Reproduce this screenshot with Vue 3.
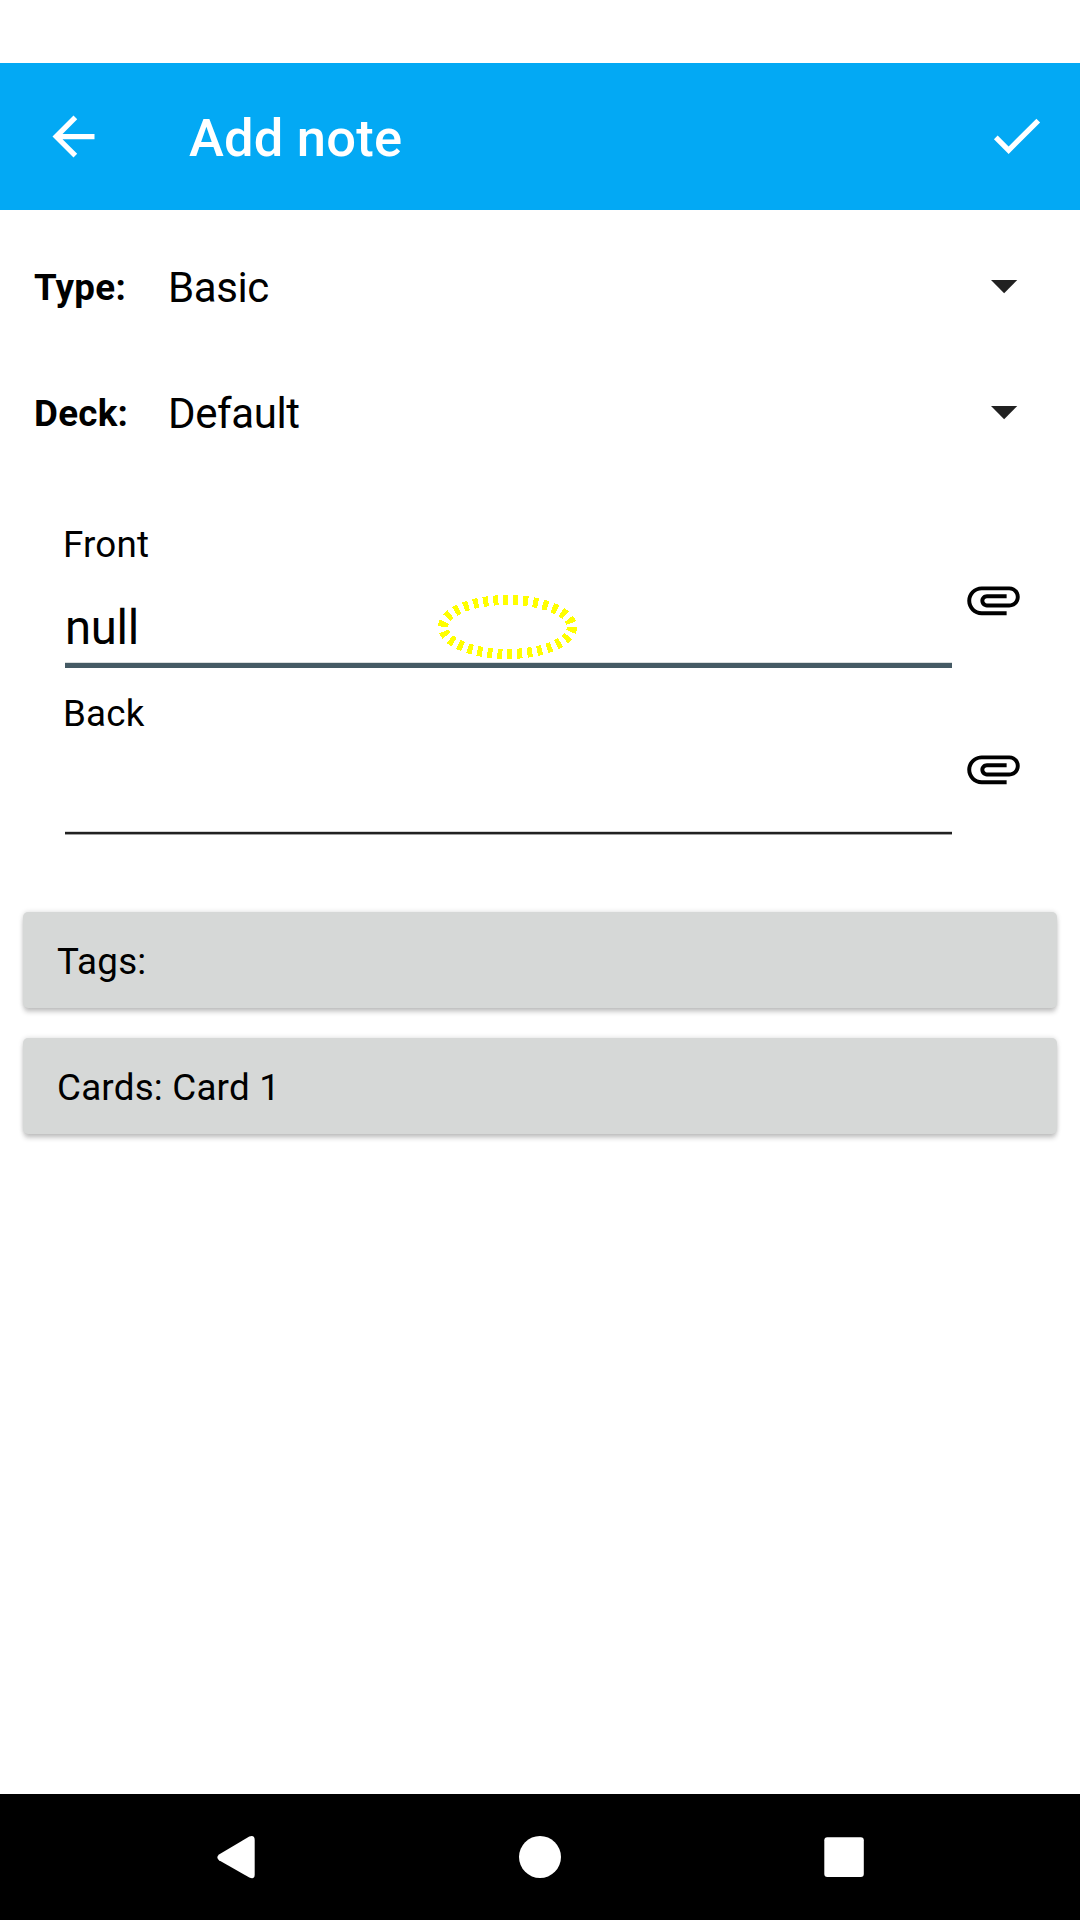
<script setup>
const selectors = [
  { label: 'Type:', value: 'Basic' },
  { label: 'Deck:', value: 'Default' },
]
const fields = [
  { label: 'Front', value: 'null', focused: true },
  { label: 'Back', value: '', focused: false },
]
const buttons = ['Tags:', 'Cards: Card 1']
</script>

<template>
  <div class="screen">
    <div class="status"></div>
    <header class="toolbar">
      <svg class="icon" viewBox="0 0 24 24"><path d="M20 11H7.83l5.59-5.59L12 4l-8 8 8 8 1.41-1.41L7.83 13H20v-2z" /></svg>
      <h1>Add note</h1>
      <svg class="icon check" viewBox="0 0 24 24"><path d="M9 16.17L4.83 12l-1.42 1.41L9 19 21 7l-1.41-1.41z" /></svg>
    </header>

    <main>
      <div v-for="s in selectors" :key="s.label" class="selector">
        <span class="name">{{ s.label }}</span>
        <span class="value">{{ s.value }}</span>
        <svg class="caret" viewBox="0 0 10 5"><path d="M0 0l5 5 5-5z" /></svg>
      </div>

      <section class="fields">
        <div v-for="f in fields" :key="f.label" class="field">
          <div class="entry">
            <label>{{ f.label }}</label>
            <div class="input">{{ f.value }}</div>
            <div class="line" :class="{ focused: f.focused }"></div>
          </div>
          <svg class="clip" viewBox="0 0 24 24"><path d="M7.5 18C4.46 18 2 15.54 2 12.5S4.46 7 7.5 7H18c2.21 0 4 1.79 4 4s-1.79 4-4 4H9.5C8.12 15 7 13.88 7 12.5S8.12 10 9.5 10H17v1.5H9.5c-.55 0-1 .45-1 1s.45 1 1 1H18c1.38 0 2.5-1.12 2.5-2.5S19.38 8.5 18 8.5H7.500c-2.21 0-4 1.79-4 4s1.79 4 4 4H17V18H7.5z" /></svg>
          <svg v-if="f.focused" class="marker" viewBox="0 0 140 64">
            <ellipse cx="69.5" cy="32" rx="64.5" ry="27" />
          </svg>
        </div>
      </section>

      <div class="buttons">
        <div v-for="b in buttons" :key="b" class="button">{{ b }}</div>
      </div>
    </main>

    <nav>
      <svg viewBox="0 0 1080 126">
        <path d="M219 60.5L249.3 42.4Q254.7 40.500 254.7 46V80.5Q254.7 86 249.3 83.6L219 66.2Q215.6 63.4 219 60.5Z" />
        <circle cx="540" cy="63" r="21" />
        <rect x="824.3" y="43.2" width="39.5" height="39.7" rx="3" />
      </svg>
    </nav>
  </div>
</template>

<style>
body { background: #fff; }
</style>

<style scoped>
.screen {
  width: 1080px;
  height: 1920px;
  display: flex;
  flex-direction: column;
  overflow: hidden;
  background: #fff;
  color: #000;
  font-family: Roboto, sans-serif;
}
.status { height: 63px; flex: none; }
.toolbar {
  height: 147px;
  flex: none;
  box-sizing: border-box;
  padding: 0 32px 0 42px;
  display: flex;
  align-items: center;
  background: #03a9f4;
  color: #fff;
}
.icon { width: 63px; height: 63px; fill: #fff; flex: none; }
.check { margin-bottom: 2px; }
h1 {
  flex: 1;
  margin: 3px 0 0 84px;
  font-size: 52.5px;
  line-height: 62px;
  font-weight: 500;
  letter-spacing: .2px;
}
main { flex: 1; padding-top: 14px; }
.selector {
  height: 126px;
  display: flex;
  align-items: center;
  padding: 0 62.5px 0 34px;
}
.name { width: 134px; font-size: 36.75px; font-weight: 700; line-height: 43px; letter-spacing: .25px; }
.value { flex: 1; font-size: 42px; line-height: 49px; letter-spacing: -.4px; }
.caret { width: 26.25px; height: 13.125px; fill: #212121; }
.fields { padding: 47px 0 0 65px; }
.field { position: relative; height: 169px; display: flex; }
.entry { width: 887px; display: flex; flex-direction: column; }
label { font-size: 36.75px; line-height: 43px; margin-left: -2px; letter-spacing: .2px; }
.input { font-size: 47.25px; line-height: 56px; height: 95px; padding-top: 34px; box-sizing: border-box; letter-spacing: -.3px; }
.line { height: 2px; margin-top: 1px; background: #212121; border-top: 1px solid #d3d3d3; border-bottom: 1px solid #a0a0a0; }
.line.focused { height: 5px; background: #455a64; border-top-color: #dadede; border-bottom: 0; }
.clip { width: 63px; height: 63px; margin: 45px 0 0 10px; }
.marker { position: absolute; left: 373px; top: 72px; width: 140px; height: 64px; }
.marker ellipse {
  fill: none;
  stroke: #ff0;
  stroke-width: 10;
  stroke-dasharray: 5 5;
  shape-rendering: crispEdges;
}
.buttons { display: flex; flex-direction: column; gap: 30px; padding: 51px 23px 0; }
.button {
  height: 96px;
  box-sizing: border-box;
  padding: 28px 34px 0;
  border-radius: 5px;
  background: #d6d8d7;
  box-shadow: 0 5px 5px -1px rgba(0, 0, 0, .2), 0 0 5px rgba(0, 0, 0, .15);
  font-size: 36.75px;
  line-height: 43px;
  letter-spacing: .22px;
}
nav { height: 126px; flex: none; background: #000; }
nav svg { display: block; width: 1080px; height: 126px; fill: #fff; }
</style>
